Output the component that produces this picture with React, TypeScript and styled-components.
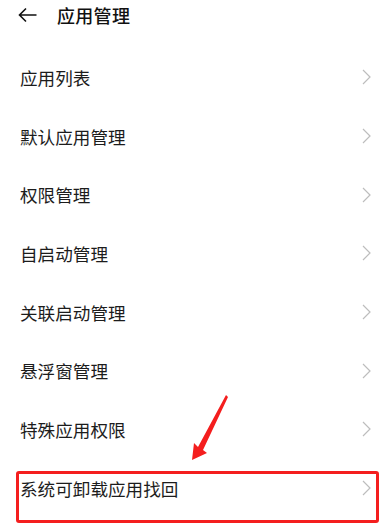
import React from "react";
import styled, { createGlobalStyle } from "styled-components";

const GlobalStyle = createGlobalStyle`
  html, body {
    margin: 0;
    padding: 0;
    background: #ffffff;
  }
  body {
    font-family: "Noto Sans CJK SC", "Noto Sans", sans-serif;
    color: #1a1a1a;
  }
`;

const Screen = styled.div`
  position: relative;
  width: 392px;
  height: 525px;
  overflow: hidden;
  background: #fff;
`;

const Header = styled.div`
  display: flex;
  align-items: center;
  height: 30px;
  padding: 0 0 20px 17px;
  gap: 19px;
`;

const BackBtn = styled.div`
  display: flex;
  width: 21px;
  height: 16px;
`;

const Title = styled.h1`
  margin: 0;
  font-size: 18px;
  font-weight: 500;
  letter-spacing: 0.3px;
  color: #111;
`;

const List = styled.ul`
  list-style: none;
  margin: 0;
  padding: 0;
`;

const Row = styled.li`
  display: flex;
  align-items: center;
  justify-content: space-between;
  height: 58.7px;
  padding: 0 21px 0 20px;
  font-size: 17.6px;
  color: #1c1c1c;

  &:first-child {
    margin-top: -1px;
  }
`;

const Label = styled.span`
  margin-top: -2px;
`;

const Chevron = styled.svg`
  width: 9px;
  height: 16px;
  margin-top: -2px;
`;

const Highlight = styled.div`
  position: absolute;
  left: 16px;
  top: 471px;
  width: 357px;
  height: 46px;
  border: 3px solid #f41e1e;
  border-radius: 3px;
`;

const Pointer = styled.svg`
  position: absolute;
  left: 185px;
  top: 392px;
`;

const items = [
  "应用列表",
  "默认应用管理",
  "权限管理",
  "自启动管理",
  "关联启动管理",
  "悬浮窗管理",
  "特殊应用权限",
  "系统可卸载应用找回",
];

export default function App() {
  return (
    <Screen>
      <GlobalStyle />
      <Header>
        <BackBtn>
          <svg width="21" height="16" viewBox="0 0 21 16" fill="none">
            <path d="M19.5 8H2.5M9 1.5L2.5 8L9 14.5" stroke="#111" strokeWidth="1.6" />
          </svg>
        </BackBtn>
        <Title>应用管理</Title>
      </Header>
      <List>
        {items.map((t) => (
          <Row key={t}>
            <Label>{t}</Label>
            <Chevron viewBox="0 0 9 16" fill="none">
              <path d="M1 1L8 8L1 15" stroke="#bdbdbd" strokeWidth="1.2" />
            </Chevron>
          </Row>
        ))}
      </List>
      <Highlight />
      <Pointer width="50" height="72" viewBox="0 0 50 72">
        <path d="M41 3L43 5L18 58L22 61L7 68L9 51L13 55Z" fill="#f41e1e" />
      </Pointer>
    </Screen>
  );
}
